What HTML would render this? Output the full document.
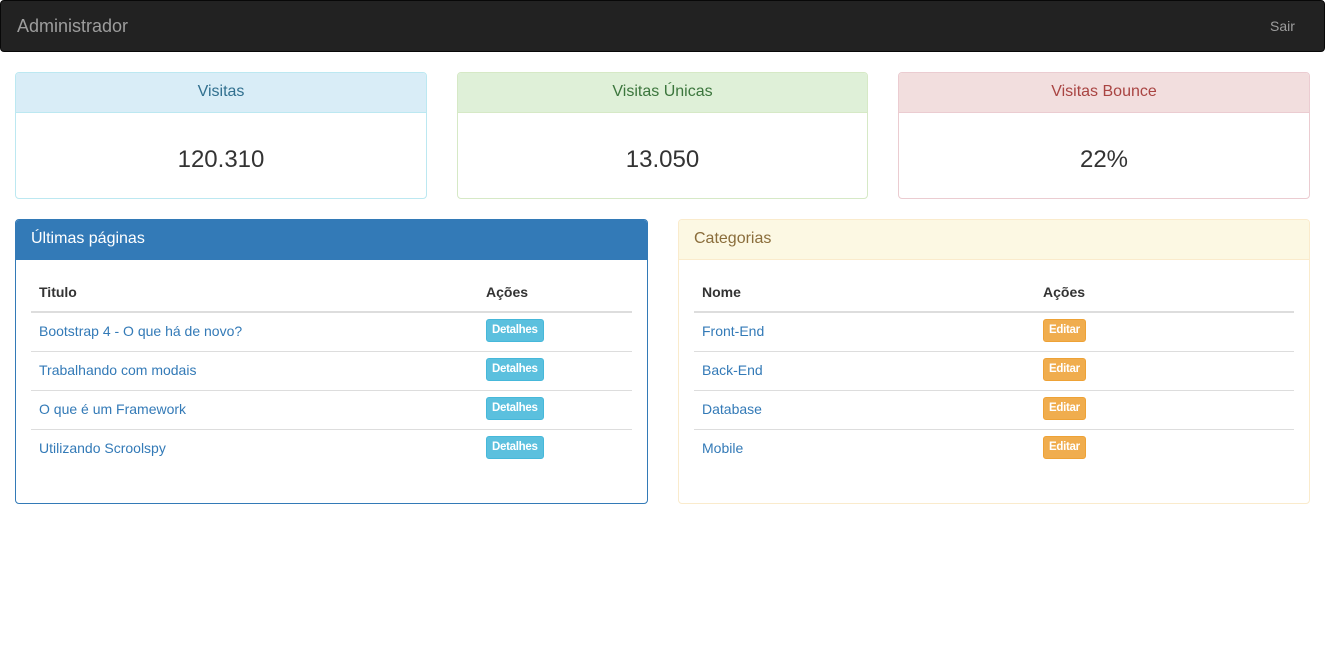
<!DOCTYPE html>
<html><head><meta charset="utf-8"><style>
*{box-sizing:border-box}
body{margin:0;width:1325px;height:667px;background:#fff;font-family:"Liberation Sans",Arial,sans-serif;font-size:14px;color:#333;position:relative;overflow:hidden}
.nav{position:absolute;left:0;top:0;width:1325px;height:52px;background:#222;border:1px solid #080808;border-radius:4px}
.brand{position:absolute;left:16px;top:15px;font-size:18px;color:#9d9d9d}
.sair{position:absolute;left:1269px;top:17px;color:#9d9d9d}
.p{position:absolute;border:1px solid;border-radius:4px;background:#fff;overflow:hidden}
.h{height:40px;line-height:38px;font-size:16px;border-bottom:1px solid}
.c{text-align:center}
.num{font-size:24px;text-align:center;margin-top:33px}
table{position:absolute;border-collapse:collapse;top:57px}
th{text-align:left;font-weight:bold;height:35px;padding:0 8px;border-bottom:2px solid #ddd;vertical-align:top;padding-top:7px}
td{height:39px;padding:0 8px;border-top:1px solid #ddd;vertical-align:middle;padding-bottom:2px}
tr:first-child+tr td{border-top:0}
td a{color:#337ab7;text-decoration:none}
.b{display:inline-block;font-size:11.5px;font-weight:bold;color:#fff;padding:3px 5px;border-radius:3px;line-height:15px;letter-spacing:-0.3px}
.i{background:#5bc0de;border:1px solid #46b8da}
.w{background:#f0ad4e;border:1px solid #eea236}
</style></head><body>
<div class="nav"><span class="brand">Administrador</span><span class="sair">Sair</span></div>

<div class="p" style="left:15px;top:72px;width:412px;height:127px;border-color:#bce8f1"><div class="h c" style="background:#d9edf7;color:#31708f;border-color:#bce8f1">Visitas</div><div class="num">120.310</div></div>
<div class="p" style="left:457px;top:72px;width:411px;height:127px;border-color:#d6e9c6"><div class="h c" style="background:#dff0d8;color:#3c763d;border-color:#d6e9c6">Visitas Únicas</div><div class="num">13.050</div></div>
<div class="p" style="left:898px;top:72px;width:412px;height:127px;border-color:#ebccd1"><div class="h c" style="background:#f2dede;color:#a94442;border-color:#ebccd1">Visitas Bounce</div><div class="num">22%</div></div>

<div class="p" style="left:15px;top:219px;width:633px;height:285px;border-color:#337ab7"><div class="h" style="background:#337ab7;color:#fff;border-color:#337ab7;padding-left:15px">Últimas páginas</div>
<table style="left:15px;width:601px"><tr><th style="width:447px">Titulo</th><th>Ações</th></tr>
<tr><td><a>Bootstrap 4 - O que há de novo?</a></td><td><span class="b i">Detalhes</span></td></tr>
<tr><td><a>Trabalhando com modais</a></td><td><span class="b i">Detalhes</span></td></tr>
<tr><td><a>O que é um Framework</a></td><td><span class="b i">Detalhes</span></td></tr>
<tr><td><a>Utilizando Scroolspy</a></td><td><span class="b i">Detalhes</span></td></tr></table></div>

<div class="p" style="left:678px;top:219px;width:632px;height:285px;border-color:#faebcc"><div class="h" style="background:#fcf8e3;color:#8a6d3b;border-color:#faebcc;padding-left:15px">Categorias</div>
<table style="left:15px;width:600px"><tr><th style="width:341px">Nome</th><th>Ações</th></tr>
<tr><td><a>Front-End</a></td><td><span class="b w">Editar</span></td></tr>
<tr><td><a>Back-End</a></td><td><span class="b w">Editar</span></td></tr>
<tr><td><a>Database</a></td><td><span class="b w">Editar</span></td></tr>
<tr><td><a>Mobile</a></td><td><span class="b w">Editar</span></td></tr></table></div>
</body></html>
